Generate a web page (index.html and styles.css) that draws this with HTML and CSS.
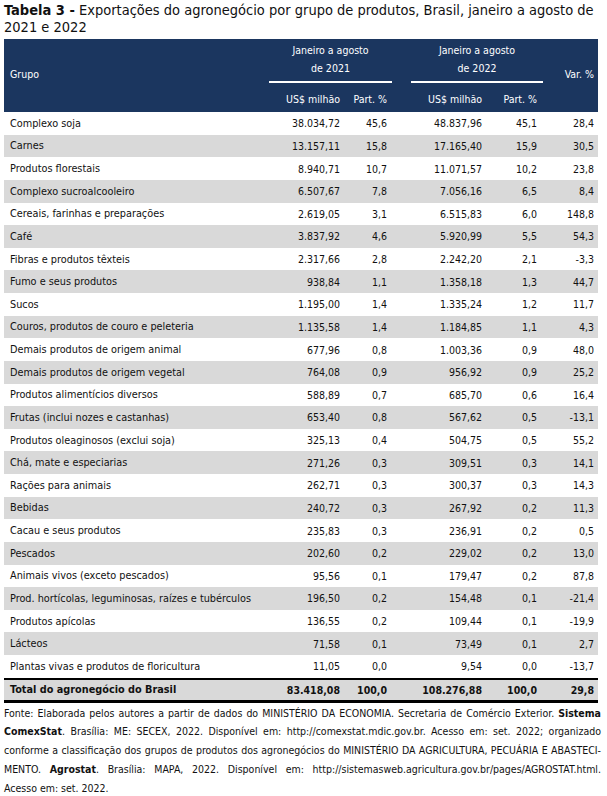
FILE: index.html
```html
<!DOCTYPE html>
<html lang="pt-BR">
<head>
<meta charset="utf-8">
<title>Tabela 3</title>
<link rel="stylesheet" href="styles.css">
</head>
<body>
<div class="page">
  <h1 class="title"><b>Tabela 3 -</b> Exportações do agronegócio por grupo de produtos, Brasil, janeiro a agosto de<br>2021 e 2022</h1>
  <table class="tbl">
    <colgroup>
      <col class="c-grp"><col class="c-val"><col class="c-part"><col class="c-gap"><col class="c-val"><col class="c-part2"><col class="c-var">
    </colgroup>
    <thead>
      <tr class="h1">
        <th rowspan="2" class="grp mid">Grupo</th>
        <th colspan="2" class="period"><div class="period-in">Janeiro a agosto<br>de 2021</div></th>
        <th rowspan="2"></th>
        <th colspan="2" class="period"><div class="period-in">Janeiro a agosto<br>de 2022</div></th>
        <th rowspan="2" class="num mid var">Var. %</th>
      </tr>
      <tr class="h2">
        <th class="num v">US$ milhão</th>
        <th class="num p">Part. %</th>
        <th class="num v">US$ milhão</th>
        <th class="num p2">Part. %</th>
      </tr>
    </thead>
    <tbody>
      <tr><td class="grp">Complexo soja</td><td class="num v">38.034,72</td><td class="num p">45,6</td><td></td><td class="num v">48.837,96</td><td class="num p2">45,1</td><td class="num var">28,4</td></tr>
      <tr><td class="grp">Carnes</td><td class="num v">13.157,11</td><td class="num p">15,8</td><td></td><td class="num v">17.165,40</td><td class="num p2">15,9</td><td class="num var">30,5</td></tr>
      <tr><td class="grp">Produtos florestais</td><td class="num v">8.940,71</td><td class="num p">10,7</td><td></td><td class="num v">11.071,57</td><td class="num p2">10,2</td><td class="num var">23,8</td></tr>
      <tr><td class="grp">Complexo sucroalcooleiro</td><td class="num v">6.507,67</td><td class="num p">7,8</td><td></td><td class="num v">7.056,16</td><td class="num p2">6,5</td><td class="num var">8,4</td></tr>
      <tr><td class="grp">Cereais, farinhas e preparações</td><td class="num v">2.619,05</td><td class="num p">3,1</td><td></td><td class="num v">6.515,83</td><td class="num p2">6,0</td><td class="num var">148,8</td></tr>
      <tr><td class="grp">Café</td><td class="num v">3.837,92</td><td class="num p">4,6</td><td></td><td class="num v">5.920,99</td><td class="num p2">5,5</td><td class="num var">54,3</td></tr>
      <tr><td class="grp">Fibras e produtos têxteis</td><td class="num v">2.317,66</td><td class="num p">2,8</td><td></td><td class="num v">2.242,20</td><td class="num p2">2,1</td><td class="num var">-3,3</td></tr>
      <tr><td class="grp">Fumo e seus produtos</td><td class="num v">938,84</td><td class="num p">1,1</td><td></td><td class="num v">1.358,18</td><td class="num p2">1,3</td><td class="num var">44,7</td></tr>
      <tr><td class="grp">Sucos</td><td class="num v">1.195,00</td><td class="num p">1,4</td><td></td><td class="num v">1.335,24</td><td class="num p2">1,2</td><td class="num var">11,7</td></tr>
      <tr><td class="grp">Couros, produtos de couro e peleteria</td><td class="num v">1.135,58</td><td class="num p">1,4</td><td></td><td class="num v">1.184,85</td><td class="num p2">1,1</td><td class="num var">4,3</td></tr>
      <tr><td class="grp">Demais produtos de origem animal</td><td class="num v">677,96</td><td class="num p">0,8</td><td></td><td class="num v">1.003,36</td><td class="num p2">0,9</td><td class="num var">48,0</td></tr>
      <tr><td class="grp">Demais produtos de origem vegetal</td><td class="num v">764,08</td><td class="num p">0,9</td><td></td><td class="num v">956,92</td><td class="num p2">0,9</td><td class="num var">25,2</td></tr>
      <tr><td class="grp">Produtos alimentícios diversos</td><td class="num v">588,89</td><td class="num p">0,7</td><td></td><td class="num v">685,70</td><td class="num p2">0,6</td><td class="num var">16,4</td></tr>
      <tr><td class="grp">Frutas (inclui nozes e castanhas)</td><td class="num v">653,40</td><td class="num p">0,8</td><td></td><td class="num v">567,62</td><td class="num p2">0,5</td><td class="num var">-13,1</td></tr>
      <tr><td class="grp">Produtos oleaginosos (exclui soja)</td><td class="num v">325,13</td><td class="num p">0,4</td><td></td><td class="num v">504,75</td><td class="num p2">0,5</td><td class="num var">55,2</td></tr>
      <tr><td class="grp">Chá, mate e especiarias</td><td class="num v">271,26</td><td class="num p">0,3</td><td></td><td class="num v">309,51</td><td class="num p2">0,3</td><td class="num var">14,1</td></tr>
      <tr><td class="grp">Rações para animais</td><td class="num v">262,71</td><td class="num p">0,3</td><td></td><td class="num v">300,37</td><td class="num p2">0,3</td><td class="num var">14,3</td></tr>
      <tr><td class="grp">Bebidas</td><td class="num v">240,72</td><td class="num p">0,3</td><td></td><td class="num v">267,92</td><td class="num p2">0,2</td><td class="num var">11,3</td></tr>
      <tr><td class="grp">Cacau e seus produtos</td><td class="num v">235,83</td><td class="num p">0,3</td><td></td><td class="num v">236,91</td><td class="num p2">0,2</td><td class="num var">0,5</td></tr>
      <tr><td class="grp">Pescados</td><td class="num v">202,60</td><td class="num p">0,2</td><td></td><td class="num v">229,02</td><td class="num p2">0,2</td><td class="num var">13,0</td></tr>
      <tr><td class="grp">Animais vivos (exceto pescados)</td><td class="num v">95,56</td><td class="num p">0,1</td><td></td><td class="num v">179,47</td><td class="num p2">0,2</td><td class="num var">87,8</td></tr>
      <tr><td class="grp">Prod. hortícolas, leguminosas, raízes e tubérculos</td><td class="num v">196,50</td><td class="num p">0,2</td><td></td><td class="num v">154,48</td><td class="num p2">0,1</td><td class="num var">-21,4</td></tr>
      <tr><td class="grp">Produtos apícolas</td><td class="num v">136,55</td><td class="num p">0,2</td><td></td><td class="num v">109,44</td><td class="num p2">0,1</td><td class="num var">-19,9</td></tr>
      <tr><td class="grp">Lácteos</td><td class="num v">71,58</td><td class="num p">0,1</td><td></td><td class="num v">73,49</td><td class="num p2">0,1</td><td class="num var">2,7</td></tr>
      <tr><td class="grp">Plantas vivas e produtos de floricultura</td><td class="num v">11,05</td><td class="num p">0,0</td><td></td><td class="num v">9,54</td><td class="num p2">0,0</td><td class="num var">-13,7</td></tr>
    </tbody>
    <tfoot>
      <tr class="total"><td class="grp">Total do agronegócio do Brasil</td><td class="num v">83.418,08</td><td class="num p">100,0</td><td></td><td class="num v">108.276,88</td><td class="num p2">100,0</td><td class="num var">29,8</td></tr>
    </tfoot>
  </table>
  <div class="source">
    <span class="ln">Fonte: Elaborada pelos autores a partir de dados do MINISTÉRIO DA ECONOMIA. Secretaria de Comércio Exterior. <b>Sistema</b></span>
    <span class="ln"><b>ComexStat</b>. Brasília: ME: SECEX, 2022. Disponível em: http://comexstat.mdic.gov.br. Acesso em: set. 2022; organizado</span>
    <span class="ln">conforme a classificação dos grupos de produtos dos agronegócios do MINISTÉRIO DA AGRICULTURA, PECUÁRIA E ABASTECI-</span>
    <span class="ln">MENTO. <b>Agrostat</b>. Brasília: MAPA, 2022. Disponível em: http://sistemasweb.agricultura.gov.br/pages/AGROSTAT.html.</span>
    <span class="ln last">Acesso em: set. 2022.</span>
  </div>
</div>
</body>
</html>
```

FILE: styles.css
```css
html, body {
  margin: 0;
  padding: 0;
  background: #ffffff;
}

body {
  font-family: "DejaVu Sans Condensed", "DejaVu Sans", sans-serif;
  color: #111111;
}

.page {
  padding: 2px 6px 0 4px;
}

.title {
  margin: 0 0 3px;
  font-size: 14.5px;
  line-height: 17px;
  font-weight: normal;
  color: #111111;
}

.title b {
  font-weight: bold;
}

.tbl {
  width: 594px;
  table-layout: fixed;
  border-collapse: separate;
  border-spacing: 0;
  font-size: 10.5px;
}

.c-grp { width: 265px; }
.c-val { width: 78px; }
.c-part { width: 45px; }
.c-gap { width: 19px; }
.c-part2 { width: 54px; }
.c-var { width: 55px; }

.tbl th {
  background: #1b365f;
  color: #ffffff;
  font-weight: normal;
  padding: 0;
}

.tbl td,
.tbl th {
  padding: 0;
  white-space: nowrap;
}

.h1 th {
  height: 44px;
}

.h1 th.mid {
  vertical-align: middle;
  padding-bottom: 4px;
}

.h1 th.period {
  vertical-align: bottom;
  padding-bottom: 2px;
  text-align: center;
}

.period-in {
  line-height: 18px;
  padding-bottom: 4px;
  border-bottom: 2px solid #ffffff;
}

.h2 th {
  height: 27px;
  vertical-align: middle;
}

.grp {
  text-align: left;
  padding-left: 6px !important;
}

.tbl td.grp {
  font-size: 10.8px;
}

.num {
  text-align: right;
}

.v { padding-right: 7px !important; }
.p { padding-right: 5px !important; }
.p2 { padding-right: 6px !important; }
.var { padding-right: 4px !important; }

.tbl tbody tr {
  height: 22.64px;
}

.tbl tbody tr:nth-child(even) td {
  background: #d9d9d9;
}

.tbl tbody td {
  vertical-align: middle;
}

.total td {
  background: #d9d9d9;
  font-weight: bold;
  height: 20px;
  border-top: 2px solid #000000;
  border-bottom: 3px solid #000000;
}

.source {
  margin: 1px 0 0;
  font-size: 10.5px;
  line-height: 18.8px;
}

.source .ln {
  display: block;
  text-align: justify;
  text-align-last: justify;
}

.source .ln.last {
  text-align: left;
  text-align-last: left;
}

.source b {
  font-weight: bold;
}
```
